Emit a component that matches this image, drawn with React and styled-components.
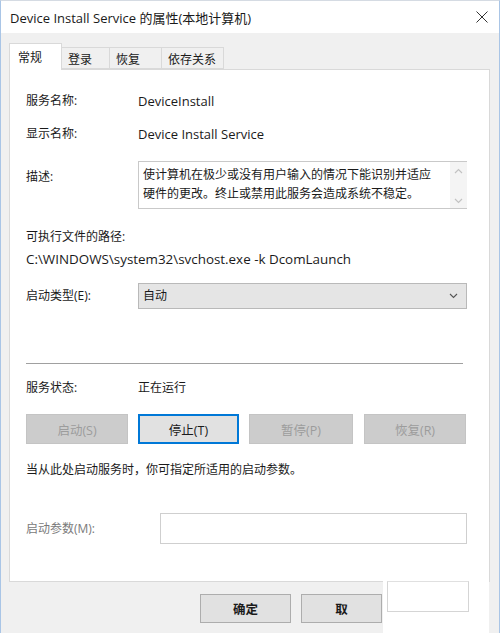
import React from "react";
import styled, { createGlobalStyle } from "styled-components";

const Global = createGlobalStyle`
  html, body {
    margin: 0;
    padding: 0;
    background: #ffffff;
    overflow: hidden;
  }
  * { box-sizing: border-box; }
`;

const FONT = `"Open Sans", "Noto Sans CJK SC", sans-serif`;

const Window = styled.div`
  position: relative;
  width: 500px;
  height: 633px;
  display: flex;
  flex-direction: column;
  background: #f0f0f0;
  border-left: 1px solid #a9c5e6;
  border-right: 1px solid #a9c5e6;
  border-top: 1px solid #d5dbe3;
  font-family: ${FONT};
  font-size: 12px;
  color: #1a1a1a;
  overflow: hidden;
`;

const TitleBar = styled.div`
  height: 32px;
  flex-shrink: 0;
  background: #ffffff;
  display: flex;
  align-items: center;
  justify-content: space-between;
  padding: 0 10px 0 9px;
  font-size: 13px;
  color: #1a1a1a;
`;

const CloseBtn = styled.svg`
  width: 12px;
  height: 12px;
  margin-right: 1px;
`;

const Body = styled.div`
  flex: 1;
  display: flex;
  flex-direction: column;
  padding: 10px 8px 0 8px;
`;

const TabStrip = styled.div`
  display: flex;
  align-items: flex-end;
  height: 26px;
  position: relative;
  z-index: 1;
`;

const Tab = styled.div`
  height: ${(p) => (p.$active ? "27px" : "22px")};
  margin-bottom: ${(p) => (p.$active ? "-1px" : "0")};
  width: ${(p) => p.$w}px;
  display: flex;
  align-items: center;
  padding-left: ${(p) => (p.$active ? "8px" : "6px")};
  padding-top: ${(p) => (p.$active ? "0" : "2px")};
  white-space: nowrap;
  background: ${(p) => (p.$active ? "#ffffff" : "#f0f0f0")};
  border: 1px solid #d9d9d9;
  border-bottom: ${(p) => (p.$active ? "none" : "1px solid #d9d9d9")};
  border-left: ${(p) => (p.$first || p.$active ? "1px solid #d9d9d9" : "none")};
  font-size: 12px;
  color: #1a1a1a;
`;

const Panel = styled.div`
  width: 481px;
  height: 513px;
  background: #ffffff;
  border: 1px solid #d9d9d9;
  display: flex;
  flex-direction: column;
  padding: 0 22px 0 16px;
`;

const Row = styled.div`
  display: grid;
  grid-template-columns: ${(p) => p.$label || 112}px 1fr;
  align-items: ${(p) => (p.$top ? "start" : "center")};
  margin-top: ${(p) => p.$mt}px;
  line-height: 16px;
`;

const Label = styled.div`
  color: ${(p) => (p.$dim ? "#7a7a7a" : "#1a1a1a")};
  padding-top: ${(p) => p.$pt || 0}px;
`;

const Value = styled.div`
  font-size: 13px;
  color: #1a1a1a;
`;

const Line = styled.div`
  margin-top: ${(p) => p.$mt}px;
  line-height: 16px;
  font-size: ${(p) => p.$fs || 12}px;
  color: #1a1a1a;
`;

const TextBox = styled.div`
  height: 48px;
  border: 1px solid #c9c9c9;
  border-right: none;
  display: flex;
  background: #ffffff;
`;

const TextContent = styled.div`
  flex: 1;
  padding: 3px 4px;
  line-height: 19px;
  font-size: 12px;
  color: #1a1a1a;
`;

const ScrollBar = styled.div`
  width: 17px;
  background: #f4f4f4;
  display: flex;
  flex-direction: column;
  justify-content: space-between;
  align-items: center;
  padding: 6px 0 4px;
`;

const Chevron = styled.svg`
  width: 9px;
  height: 6px;
`;

const Select = styled.div`
  height: 26px;
  background: #e5e5e5;
  border: 1px solid #b9b9b9;
  display: flex;
  align-items: center;
  justify-content: space-between;
  padding: 0 8px 0 4px;
  color: #1a1a1a;
`;

const Separator = styled.div`
  margin-top: ${(p) => p.$mt}px;
  height: 1px;
  width: 437px;
  background: #a0a0a0;
`;

const ButtonRow = styled.div`
  display: flex;
  margin-top: ${(p) => p.$mt}px;
  height: 30px;
`;

const Button = styled.div`
  width: ${(p) => p.$w}px;
  margin-left: ${(p) => p.$ml || 0}px;
  height: 30px;
  display: flex;
  align-items: center;
  justify-content: center;
  font-size: 12.5px;
  background: ${(p) => (p.$disabled ? "#cccccc" : "#e1e1e1")};
  color: ${(p) => (p.$disabled ? "#9c9c9c" : "#1a1a1a")};
  border: ${(p) =>
    p.$focus ? "2px solid #0078d7" : p.$disabled ? "1px solid #c4c4c4" : "1px solid #adadad"};
`;

const Input = styled.div`
  height: 31px;
  background: #ffffff;
  border: 1px solid #cfcfcf;
`;

const Footer = styled.div`
  display: flex;
  padding: 12px 0 0 191px;
  gap: 10px;
`;

const FooterButton = styled.div`
  width: ${(p) => p.$w}px;
  height: 29px;
  background: #e1e1e1;
  border: 1px solid #adadad;
  display: flex;
  align-items: center;
  justify-content: center;
  font-size: 12.5px;
  font-weight: 600;
  color: #1a1a1a;
`;

/* leftover patch from the pasted image: white block with an empty field on it */
const Patch = styled.div`
  position: absolute;
  left: 382px;
  top: 580px;
  right: 10px;
  bottom: 0;
  background: #ffffff;
  padding: 0 0 0 4px;
`;

const PatchField = styled.div`
  width: 82px;
  height: 31px;
  border: 1px solid #d5d5d5;
  border-top-color: #e0e0e0;
`;

const tabs = [
  { t: "常规", w: 53, active: true },
  { t: "登录", w: 48 },
  { t: "恢复", w: 52 },
  { t: "依存关系", w: 62 },
];

export default function App() {
  return (
    <>
      <Global />
      <Window>
        <TitleBar>
          <span>Device Install Service 的属性(本地计算机)</span>
          <CloseBtn viewBox="0 0 12 12">
            <path d="M0.5 0.5 L11.5 11.5 M11.5 0.5 L0.5 11.5" stroke="#333" strokeWidth="1" fill="none" />
          </CloseBtn>
        </TitleBar>
        <Body>
          <TabStrip>
            {tabs.map((tab, i) => (
              <Tab key={tab.t} $active={tab.active} $first={i === 0} $w={tab.w}>
                {tab.t}
              </Tab>
            ))}
          </TabStrip>
          <Panel>
            <Row $mt={23}>
              <Label>服务名称:</Label>
              <Value>DeviceInstall</Value>
            </Row>
            <Row $mt={17}>
              <Label>显示名称:</Label>
              <Value>Device Install Service</Value>
            </Row>
            <Row $mt={19} $top>
              <Label $pt={8}>描述:</Label>
              <TextBox>
                <TextContent>
                  使计算机在极少或没有用户输入的情况下能识别并适应
                  <br />
                  硬件的更改。终止或禁用此服务会造成系统不稳定。
                </TextContent>
                <ScrollBar>
                  <Chevron viewBox="0 0 9 6">
                    <path d="M1 5 L4.5 1.5 L8 5" stroke="#c2c2c2" strokeWidth="1.2" fill="none" />
                  </Chevron>
                  <Chevron viewBox="0 0 9 6">
                    <path d="M1 1 L4.5 4.5 L8 1" stroke="#c2c2c2" strokeWidth="1.2" fill="none" />
                  </Chevron>
                </ScrollBar>
              </TextBox>
            </Row>
            <Line $mt={20}>可执行文件的路径:</Line>
            <Line $mt={6} $fs={13.4}>C:\WINDOWS\system32\svchost.exe -k DcomLaunch</Line>
            <Row $mt={16}>
              <Label>启动类型(E):</Label>
              <Select>
                <span>自动</span>
                <Chevron viewBox="0 0 9 6">
                  <path d="M1 1 L4.5 4.5 L8 1" stroke="#555" strokeWidth="1.1" fill="none" />
                </Chevron>
              </Select>
            </Row>
            <Separator $mt={54} />
            <Row $mt={16}>
              <Label>服务状态:</Label>
              <div>正在运行</div>
            </Row>
            <ButtonRow $mt={18}>
              <Button $w={102} $disabled>启动(S)</Button>
              <Button $w={101} $ml={10} $focus>停止(T)</Button>
              <Button $w={104} $ml={10} $disabled>暂停(P)</Button>
              <Button $w={102} $ml={11} $disabled>恢复(R)</Button>
            </ButtonRow>
            <Line $mt={18}>当从此处启动服务时，你可指定所适用的启动参数。</Line>
            <Row $mt={35} $label={134}>
              <Label $dim>启动参数(M):</Label>
              <Input />
            </Row>
          </Panel>
          <Footer>
            <FooterButton $w={91}>确定</FooterButton>
            <FooterButton $w={81}>取</FooterButton>
          </Footer>
        </Body>
        <Patch>
          <PatchField />
        </Patch>
      </Window>
    </>
  );
}
